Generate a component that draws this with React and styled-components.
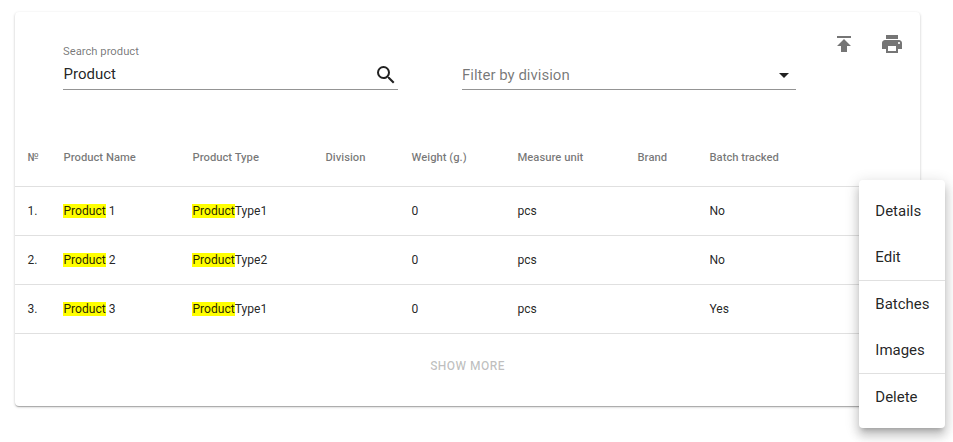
import React from "react";
import styled, { createGlobalStyle } from "styled-components";

const GlobalStyle = createGlobalStyle`
  * { box-sizing: border-box; }
  body { margin: 0; background: #fff; font-family: Roboto, sans-serif; color: rgba(0,0,0,.87); overflow: hidden; }
`;

const Page = styled.main`
  height: 442px;
  padding: 12px 33px 0 15px;
`;

const Card = styled.section`
  position: relative;
  height: 394px;
  border-radius: 4px;
  background: #fff;
  box-shadow: 0 1px 3px 0 rgba(0,0,0,.2), 0 1px 1px 0 rgba(0,0,0,.14), 0 2px 1px -1px rgba(0,0,0,.12);
`;

const Toolbar = styled.header`
  display: flex;
  align-items: flex-start;
  height: 116px;
  padding-left: 48px;
`;

const Field = styled.label`
  display: flex;
  flex-direction: column;
  justify-content: flex-end;
  width: ${(p) => p.$width}px;
  height: 78px;
  margin-right: ${(p) => p.$gap}px;
  border-bottom: 1px solid #949494;
`;

const Caption = styled.span`
  font-size: 11.25px;
  line-height: 14px;
  color: rgba(0,0,0,.54);
`;

const FieldLine = styled.span`
  display: flex;
  align-items: center;
  justify-content: space-between;
  height: ${(p) => (p.$muted ? 29 : 30)}px;
  padding-left: ${(p) => (p.$muted ? 0 : 0.5)}px;
  font-size: 15px;
  line-height: ${(p) => (p.$muted ? 18 : 20)}px;
  color: ${(p) => (p.$muted ? "rgba(0,0,0,.54)" : "rgba(0,0,0,.87)")};
`;

const Icon = styled.svg`
  display: block;
  width: 24px;
  height: 24px;
  margin-top: ${(p) => p.$drop || 0}px;
  fill: ${(p) => p.$color || "#212121"};
`;

const Actions = styled.div`
  display: flex;
  gap: 24px;
  padding-top: 20px;
`;

const Table = styled.table`
  width: 100%;
  table-layout: fixed;
  border-collapse: separate;
  border-spacing: 0;
`;

const Th = styled.th`
  height: 58px;
  padding: 0 0 0 0.5px;
  text-align: left;
  font-size: 11.25px;
  font-weight: 500;
  color: rgba(0,0,0,.54);
  white-space: nowrap;
  &:first-child { padding-left: 12.5px; }
`;

const Td = styled.td`
  height: 49px;
  padding: 0 0 0 0.4px;
  border-top: 1px solid #e0e0e0;
  font-size: 12.1px;
  white-space: nowrap;
  &:first-child { padding-left: 12.5px; }
`;

const Mark = styled.mark`
  background: #ff0;
  color: inherit;
`;

const MoreButton = styled.button`
  display: block;
  width: 100%;
  height: 64px;
  padding: 0;
  border: 0;
  border-top: 1px solid #e0e0e0;
  background: none;
  color: rgba(0,0,0,.26);
  font: 500 12px Roboto, sans-serif;
  letter-spacing: .45px;
`;

const Menu = styled.nav`
  position: absolute;
  top: 168px;
  left: 844px;
  width: 86px;
  height: 248px;
  padding: 8px 0;
  border-radius: 4px;
  background: #fff;
  box-shadow: 0 5px 5px -3px rgba(0,0,0,.2), 0 8px 10px 1px rgba(0,0,0,.14), 0 3px 14px 2px rgba(0,0,0,.12);
`;

const MenuItem = styled.div`
  display: flex;
  align-items: center;
  height: ${(p) => (p.$divided ? 47 : 46)}px;
  padding-left: 16.3px;
  border-top: ${(p) => (p.$divided ? "1px solid #e0e0e0" : "0")};
  font-size: 15px;
`;

const columns = [
  ["№", 48], ["Product Name", 129], ["Product Type", 133], ["Division", 86], ["Weight (g.)", 106],
  ["Measure unit", 120], ["Brand", 72], ["Batch tracked", 211],
];
const rows = [[1, 1, "No"], [2, 2, "No"], [3, 1, "Yes"]];
const menu = [["Details"], ["Edit"], ["Batches", true], ["Images"], ["Delete", true]];

export default function App() {
  return (
    <Page>
      <GlobalStyle />
      <Card>
        <Toolbar>
          <Field $width={335} $gap={64}>
            <Caption>Search product</Caption>
            <FieldLine>
              Product
              <Icon $drop={2} viewBox="0 0 24 24"><path d="M15.5 14h-.79l-.28-.27A6.47 6.47 0 0 0 16 9.5 6.5 6.5 0 1 0 9.5 16c1.61 0 3.09-.59 4.23-1.57l.27.28v.79l5 4.99L20.49 19l-4.99-5zm-6 0C7.01 14 5 11.99 5 9.5S7.01 5 9.5 5 14 7.01 14 9.5 11.99 14 9.5 14z" /></Icon>
            </FieldLine>
          </Field>
          <Field $width={334} $gap={36}>
            <FieldLine $muted>
              Filter by division
              <Icon viewBox="0 0 24 24"><path d="M7 10l5 5 5-5z" /></Icon>
            </FieldLine>
          </Field>
          <Actions>
            <Icon $color="#757575" viewBox="0 0 24 24"><path d="M5 4v2h14V4H5zm0 10h4v6h6v-6h4l-7-7-7 7z" /></Icon>
            <Icon $color="#757575" viewBox="0 0 24 24"><path d="M19 8H5c-1.66 0-3 1.34-3 3v6h4v4h12v-4h4v-6c0-1.66-1.34-3-3-3zm-3 11H8v-5h8v5zm3-7c-.55 0-1-.45-1-1s.45-1 1-1 1 .45 1 1-.45 1-1 1zm-1-9H6v4h12V3z" /></Icon>
          </Actions>
        </Toolbar>
        <Table>
          <colgroup>{columns.map(([name, width]) => <col key={name} width={width} />)}</colgroup>
          <thead><tr>{columns.map(([name]) => <Th key={name}>{name}</Th>)}</tr></thead>
          <tbody>
            {rows.map(([n, type, tracked]) => (
              <tr key={n}>
                <Td>{n}.</Td>
                <Td><Mark>Product</Mark> {n}</Td>
                <Td><Mark>Product</Mark>Type{type}</Td>
                <Td />
                <Td>0</Td>
                <Td>pcs</Td>
                <Td />
                <Td>{tracked}</Td>
              </tr>
            ))}
          </tbody>
        </Table>
        <MoreButton>SHOW MORE</MoreButton>
        <Menu>{menu.map(([name, divided]) => <MenuItem key={name} $divided={divided}>{name}</MenuItem>)}</Menu>
      </Card>
    </Page>
  );
}
